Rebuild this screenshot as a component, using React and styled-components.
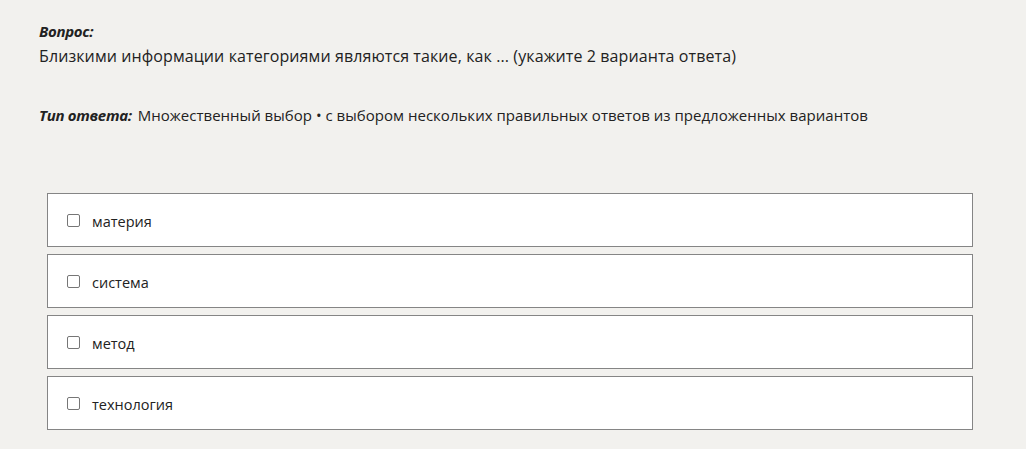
import React from 'react';
import styled, { createGlobalStyle } from 'styled-components';

const Global = createGlobalStyle`
  body {
    margin: 0;
    background: #f2f1ee;
    font-family: "Open Sans", "Noto Sans", sans-serif;
    color: #222;
  }
`;

const Page = styled.div`
  padding: 20px 0 0 39px;
  width: 1026px;
  box-sizing: border-box;
`;

const Label = styled.div`
  font-weight: 700;
  font-style: italic;
  font-size: 15px;
  line-height: 22px;
  letter-spacing: -0.3px;
`;

const QuestionText = styled.div`
  margin-top: 2px;
  font-size: 16px;
  line-height: 24px;
  letter-spacing: 0.1px;
`;

const TypeLine = styled.div`
  margin-top: 35px;
  font-size: 15px;
  line-height: 24px;
  letter-spacing: 0.02px;
`;

const TypeLabel = styled.span`
  margin-right: 2px;
  font-weight: 700;
  font-style: italic;
  font-size: 15px;
  letter-spacing: -0.3px;
`;

const Options = styled.div`
  margin: 66px 0 0 8px;
  width: 926px;
  display: flex;
  flex-direction: column;
  gap: 7px;
`;

const Option = styled.label`
  display: flex;
  align-items: center;
  gap: 12px;
  height: 54px;
  box-sizing: border-box;
  padding: 2px 0 0 19px;
  background: #fff;
  border: 1px solid #858585;
  font-size: 14.5px;
  color: #222;
`;

const Box = styled.span`
  width: 11px;
  height: 11px;
  margin-top: -2px;
  border: 1px solid #767676;
  border-radius: 2px;
  background: #fff;
`;

const options = ['материя', 'система', 'метод', 'технология'];

export default function App() {
  return (
    <Page>
      <Global />
      <Label>Вопрос:</Label>
      <QuestionText>
        Близкими информации категориями являются такие, как ... (укажите 2 варианта ответа)
      </QuestionText>
      <TypeLine>
        <TypeLabel>Тип ответа:</TypeLabel> Множественный выбор • с выбором нескольких правильных ответов из предложенных вариантов
      </TypeLine>
      <Options>
        {options.map((o) => (
          <Option key={o}>
            <Box />
            {o}
          </Option>
        ))}
      </Options>
    </Page>
  );
}
